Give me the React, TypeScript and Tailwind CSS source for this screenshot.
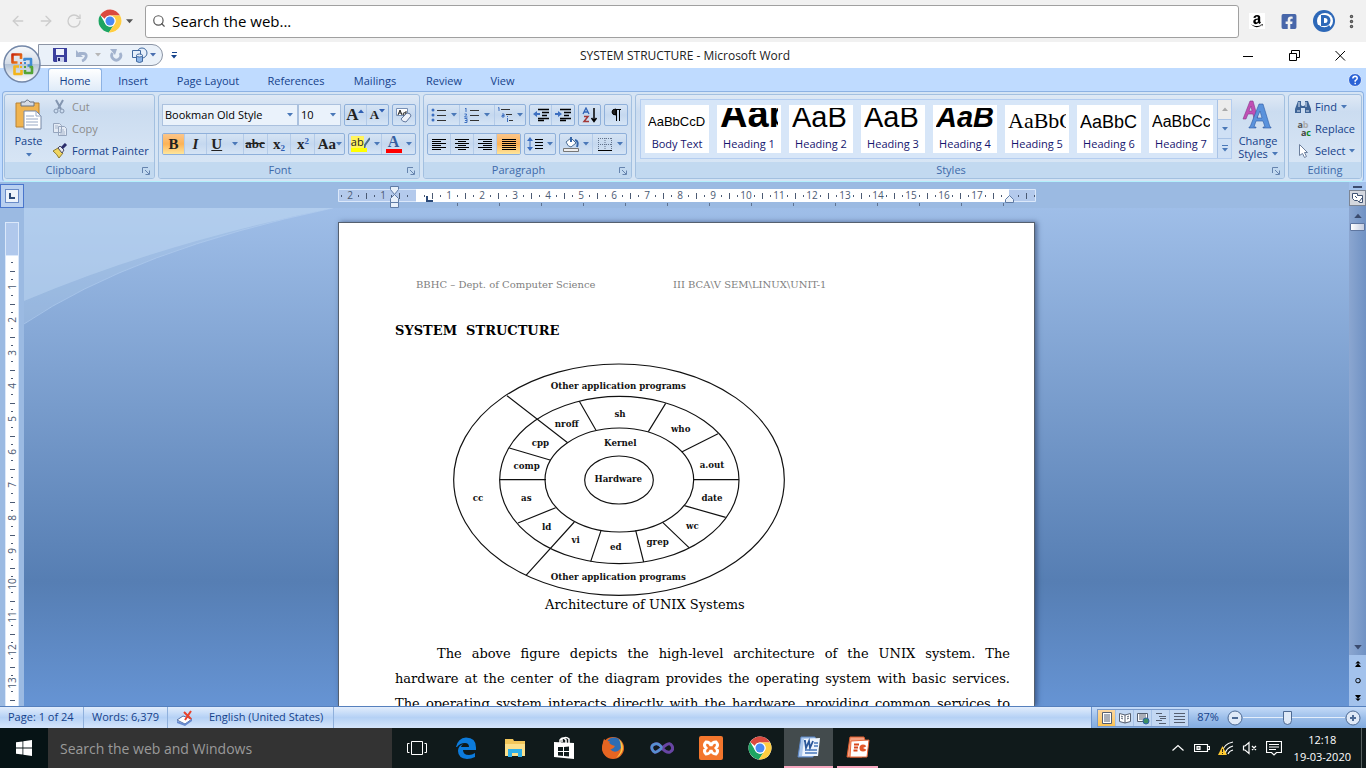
import type { ReactNode } from "react";
import clsx from "clsx";
import { ArrowLeft, ArrowRight, RotateCw, Search, EllipsisVertical } from "lucide-react";
import { FaAmazon, FaFacebookSquare } from "react-icons/fa";

function Caret({ className }: { className?: string }) {
  return (
    <svg viewBox="0 0 6 4" className={clsx("h-1 w-1.5 shrink-0", className)} fill="currentColor">
      <path d="M0 0h6L3 3.5z" />
    </svg>
  );
}

function ChromeLogo() {
  return (
    <svg viewBox="0 0 24 24" className="h-6 w-6">
      <circle cx="12" cy="12" r="11.5" fill="#fff" />
      <path d="M2.2 6A11.5 11.5 0 0 1 22.1 6.6H12a5.4 5.4 0 0 0-5 3.3z" fill="#db4a3f" />
      <path d="M2.2 6A11.5 11.5 0 0 0 10.9 23.4l4.6-6.9a5.4 5.4 0 0 1-8.3-2z" fill="#1da462" />
      <path d="M22.1 6.6A11.5 11.5 0 0 1 10.9 23.4l5.4-8.2a5.4 5.4 0 0 0 0-6.6L12 6.6z" fill="#ffcd41" />
      <circle cx="12" cy="12" r="5.6" fill="#fff" />
      <circle cx="12" cy="12" r="4.5" fill="#4a8af4" />
    </svg>
  );
}

function BrowserBar() {
  return (
    <header className="flex h-[42px] shrink-0 items-center bg-[#f1f1f1] pl-2.5">
      <nav className="flex items-center gap-3 text-[#ccc]">
        <button aria-label="Back"><ArrowLeft size={16} /></button>
        <button aria-label="Forward"><ArrowRight size={16} /></button>
        <button aria-label="Reload"><RotateCw size={16} /></button>
      </nav>
      <button aria-label="Browser" className="ml-4 flex items-center gap-1 text-[#555]">
        <ChromeLogo />
        <Caret className="h-[5px] w-[7px]" />
      </button>
      <label className="mr-2.5 ml-3 flex h-[33px] flex-1 items-center gap-1.5 rounded-[3px] border border-[#a0a0a0] bg-white pl-1.5">
        <Search size={14} className="text-[#555]" />
        <input
          aria-label="Search the web"
          placeholder="Search the web..."
          className="flex-1 text-[15px] text-black outline-none placeholder:text-black"
        />
      </label>
      <div className="flex items-center gap-4 pr-1.5">
        <button aria-label="Amazon" className="flex h-4 w-4 items-center justify-center bg-white"><FaAmazon size={14} /></button>
        <button aria-label="Facebook" className="flex h-4 w-4 items-center justify-center"><FaFacebookSquare size={17} color="#4867aa" /></button>
        <button aria-label="Disconnect">
          <svg viewBox="0 0 22 22" className="h-[22px] w-[22px]">
            <circle cx="11" cy="11" r="11" fill="#2d68b8" />
            <circle cx="12" cy="11" r="8" fill="#fff" />
            <path d="M3 15h3c3 3 8 3 10 0l2 3-6 3-6-1z" fill="#2d68b8" />
            <path d="M8 5h4a5.500 5.500 0 0 1 0 11H8zM11 8v5h1a2.500 2.500 0 0 0 0-5z" fill="#2d68b8" fillRule="evenodd" />
          </svg>
        </button>
        <button aria-label="Menu" className="-ml-2"><EllipsisVertical size={17} strokeWidth={3} color="#555" /></button>
      </div>
    </header>
  );
}

function OfficeButton() {
  return (
    <button aria-label="Office" className="absolute top-[3px] left-[3px] z-10 h-[38px] w-[38px]">
      <svg viewBox="0 0 38 38">
        <defs>
          <linearGradient id="orb" x1="0" y1="0" x2="0" y2="1">
            <stop offset="0" stopColor="#f8fafc" />
            <stop offset=".5" stopColor="#d3dbe6" />
            <stop offset=".51" stopColor="#b4c3d6" />
            <stop offset="1" stopColor="#fff" />
          </linearGradient>
          <linearGradient id="orbRed" x1="0" y1="0" x2="1" y2="1">
            <stop offset="0" stopColor="#c9280c" />
            <stop offset="1" stopColor="#f38b1c" />
          </linearGradient>
        </defs>
        <circle cx="19" cy="19" r="18" fill="url(#orb)" stroke="#7387a8" strokeWidth="1.500" />
        <g fill="none" strokeWidth="2.600" strokeLinejoin="round">
          <path d="M18 14V9.500H9.500v8h5" stroke="url(#orbRed)" />
          <path d="M21.500 16v-2H28v6.500h-3.500" stroke="#3f8bd3" />
          <path d="M16 21.500h-4.500V29h7v-4" stroke="#f3b51d" />
          <path d="M22 25v3h7v-6h-2.500" stroke="#53a435" />
        </g>
        <path d="M17 17h2v2h-2z" fill="#e8602c" />
        <path d="M21 17h2v2h-2z" fill="#3f8bd3" />
        <path d="M17 21h2v2h-2z" fill="#f3b51d" />
        <path d="M21 21h2v2h-2z" fill="#53a435" />
      </svg>
    </button>
  );
}

function TitleBar() {
  return (
    <div className="relative flex h-[26px] shrink-0 items-center bg-white">
      <OfficeButton />
      <div className="ml-[38px] flex h-[22px] w-[125px] items-center rounded-r-full border border-[#8c95a5] bg-[#eaf1f9] pl-3.5 text-[#4a6fb0]">
        <button aria-label="Save">
          <svg viewBox="0 0 14 14" className="h-3.5 w-3.5">
            <path d="M0 0h14v14H1l-1-1z" fill="#3b3f9d" />
            <path d="M3 1h8v6H3z" fill="#eef2fc" />
            <path d="M4 9h7v5H4z" fill="#c9d0ec" />
            <path d="M5 10h2v3H5z" fill="#23286e" />
          </svg>
        </button>
        <button aria-label="Undo" className="ml-2 flex items-center gap-1.5 text-[#b7b7b7]">
          <svg viewBox="0 0 14 14" className="h-3.5 w-3.5" fill="none" stroke="#a3b3ce" strokeWidth="2.800">
            <path d="M4 5.500h4q4 0 3 3.500-1 3-4 4" />
            <path d="M1 2v7h7z" fill="#a3b3ce" stroke="none" />
          </svg>
          <Caret />
        </button>
        <button aria-label="Repeat" className="ml-2">
          <svg viewBox="0 0 14 14" className="h-3.5 w-3.5" fill="none" stroke="#a3b3ce" strokeWidth="2.800">
            <path d="M3.500 5a4.500 4.500 0 1 0 7.500 0" />
            <path d="M1 1h7L6 7z" fill="#a3b3ce" stroke="none" />
          </svg>
        </button>
        <button aria-label="Shapes" className="ml-2 flex items-center gap-0.5">
          <svg viewBox="0 0 17 17" className="h-[17px] w-[17px]" fill="#e6effa" stroke="#41699f">
            <circle cx="11" cy="6" r="5" />
            <path d="M1.500 3.500h8v7h-8z" />
            <path d="M5.500 8.500v6q3 2 6 0v-6z" fill="#8fb6e8" />
            <ellipse cx="8.500" cy="8.500" rx="3" ry="1.500" />
          </svg>
          <Caret />
        </button>
      </div>
      <button aria-label="Customize Quick Access Toolbar" className="ml-2 flex flex-col items-center gap-0.5 text-[#15428b]">
        <span className="h-px w-[5px] bg-[#15428b]" />
        <Caret />
      </button>
      <h1 className="pointer-events-none absolute inset-x-0 pt-0.5 pl-1 text-center text-[12px] text-[#222]">SYSTEM STRUCTURE - Microsoft Word</h1>
      <div className="ml-auto flex gap-[35px] pr-5">
        {[
          { name: "Minimize", d: "M0 6.500h10" },
          { name: "Restore", d: "M.5 3.500h7v7h-7zM2.500 3V.5h8v7H8" },
          { name: "Close", d: "M.5 1l9.500 9.500M10 1L.5 10.500" },
        ].map((item) => (
          <button key={item.name} aria-label={item.name}>
            <svg viewBox="0 0 11 11" className="h-[11px] w-[11px]" fill="none" stroke="#000"><path d={item.d} /></svg>
          </button>
        ))}
      </div>
    </div>
  );
}

const tabs = [
  { label: "Insert", width: "w-[54px]" },
  { label: "Page Layout", width: "w-[96px]" },
  { label: "References", width: "w-[80px]" },
  { label: "Mailings", width: "w-[78px]" },
  { label: "Review", width: "w-[60px]" },
  { label: "View", width: "w-[57px]" },
];

function TabRow() {
  return (
    <nav className="flex h-[23px] shrink-0 items-center bg-[#bfdbff] pl-12 text-[#15428b]">
      <button className="h-full w-[54px] rounded-t-[3px] border border-b-0 border-[#8db2e3] bg-gradient-to-b from-white to-[#dfebf8] pt-0.5">Home</button>
      <div className="flex pt-[3px] pl-1">
        {tabs.map((tab) => (
          <button key={tab.label} className={tab.width}>{tab.label}</button>
        ))}
      </div>
      <button aria-label="Help" className="mr-1 ml-auto">
        <svg viewBox="0 0 14 14" className="h-3.5 w-3.5">
          <circle cx="7" cy="7" r="6.500" fill="#2a62d6" stroke="#dbe8fa" />
          <path d="M4.800 5.500Q5 3.300 7.200 3.300 9.300 3.500 9.200 5.300 9 6.500 7.200 7.600V8.800M7.200 9.800v1.400" fill="none" stroke="#fff" strokeWidth="1.500" />
        </svg>
      </button>
    </nav>
  );
}

interface GroupProps {
  title: string;
  launcher?: boolean;
  className?: string;
  children: ReactNode;
}

function RibbonGroup({ title, launcher = true, className, children }: GroupProps) {
  return (
    <section className={clsx("flex flex-col overflow-hidden rounded-[3px] border border-[#a3c0e0] bg-gradient-to-b from-[#dfe9f5] via-[#cbdcf0] via-20% to-[#dbe8f6]", className)}>
      <div className="flex-1">{children}</div>
      <footer className={clsx("relative flex h-4 items-center justify-center bg-[#c2d9f0] pt-px text-[#3e6aaa]", launcher && "pr-[18px]")}>
        {title}
        {launcher && (
          <button aria-label={`${title} options`} className="absolute right-1">
            <svg viewBox="0 0 8 8" className="h-2 w-2" fill="none" stroke="#6684ae"><path d="M.5 6V.5H6M3 3l4 4M7.500 3.500v4h-4" /></svg>
          </button>
        )}
      </footer>
    </section>
  );
}

function ButtonSet({ children }: { children: ReactNode }) {
  return (
    <div className="flex h-[22px] divide-x divide-[#b4cbe8] overflow-hidden rounded-[2px] border border-[#8fb0da] bg-gradient-to-b from-[#d6e4f4] via-[#c5d8ef] to-[#d5e4f5]">
      {children}
    </div>
  );
}

interface ToolProps {
  label: string;
  width?: string;
  caret?: boolean;
  active?: boolean;
  children: ReactNode;
}

function Tool({ label, width = "w-[22px]", caret, active, children }: ToolProps) {
  return (
    <button
      aria-label={label}
      className={clsx("flex items-center justify-center gap-1 text-[#222]", width, active && "bg-gradient-to-b from-[#fbc589] via-[#fcb356] to-[#fee69b]")}
    >
      {children}
      {caret && <Caret className="text-[#4a78b8]" />}
    </button>
  );
}

function Icon({ children, width = "w-4", box = "0 0 16 16" }: { children: ReactNode; width?: string; box?: string }) {
  return <svg viewBox={box} className={clsx("h-4 shrink-0", width)} fill="none" stroke="#000">{children}</svg>;
}

function ClipboardGroup() {
  return (
    <RibbonGroup title="Clipboard" className="w-[151px]">
      <div className="flex pt-px">
        <button className="flex w-[47px] flex-col items-center pt-[3px] text-[#15428b]">
          <svg viewBox="0 0 28 32" className="h-8 w-7">
            <path d="M1 4h23v24H1z" fill="#f0b450" stroke="#b88132" />
            <path d="M6 7V3h4q2-4 5 0h4v4z" fill="#d6dbe4" stroke="#69717f" />
            <path d="M9 12h12l5 5v13H9z" fill="#fff" stroke="#7688a6" />
            <path d="M21 12v5h5M11 17h8M11 20h12M11 23h12M11 26h12" fill="none" stroke="#97a8c4" />
          </svg>
          <span className="leading-5">Paste</span>
          <Caret className="mt-0.5 text-[#4a78b8]" />
        </button>
        <div className="flex flex-col text-[#8d8d8d]">
          <button className="flex h-[22px] items-center gap-1">
            <Icon>
              <path d="M4 1l5 9M11 1L6 10" stroke="#8496b0" strokeWidth="2" />
              <circle cx="4" cy="12" r="2" stroke="#8496b0" /><circle cx="10" cy="12" r="2" stroke="#8496b0" />
            </Icon>
            Cut
          </button>
          <button className="flex h-[22px] items-center gap-1">
            <Icon>
              <path d="M1.500 2.500h6l2 2v7h-8zM6.500 5.500h6l2 2v7h-8z" fill="#e4ebf5" stroke="#96a5bd" />
              <path d="M3 5h3M3 7h3M8 9h4M8 11h5M8 13h5" stroke="#a9b7cc" />
            </Icon>
            Copy
          </button>
          <button className="flex h-[22px] items-center gap-1 text-[#15428b]">
            <Icon>
              <path d="M1 8l5-3 5 5-4 5q-2-4-6-7z" fill="#efd45f" stroke="#8c7a30" />
              <path d="M6 5l2-2 4 4-2 3z" fill="#e5e8f0" stroke="#4c4c68" />
              <path d="M10 5l4-4" stroke="#2b2d6b" strokeWidth="3" />
            </Icon>
            Format Painter
          </button>
        </div>
      </div>
    </RibbonGroup>
  );
}

function ComboBox({ label, value, width }: { label: string; value: string; width: string }) {
  return (
    <label className={clsx("relative flex h-[22px] items-center border border-[#abc1de] bg-[#eaf2fb]", width)}>
      <select aria-label={label} className="h-full w-full appearance-none pl-0.5 text-black outline-none">
        <option>{value}</option>
      </select>
      <Caret className="pointer-events-none absolute right-1 text-[#4a78b8]" />
    </label>
  );
}

function FontGroup() {
  return (
    <RibbonGroup title="Font" className="w-[262px]">
      <div className="flex flex-col gap-[7px] px-[3px] pt-[9px]">
        <div className="flex gap-[3px]">
          <div className="flex">
            <ComboBox label="Font" value="Bookman Old Style" width="w-[136px]" />
            <ComboBox label="Font size" value="10" width="w-[43px]" />
          </div>
          <ButtonSet>
            <Tool label="Grow Font">
              <span className="font-['Liberation_Serif'] text-[17px] font-bold">A</span>
              <Caret className="-ml-1 mb-2 rotate-180 text-[#2f5fb3]" />
            </Tool>
            <Tool label="Shrink Font">
              <span className="font-['Liberation_Serif'] text-[13px] font-bold">A</span>
              <Caret className="-ml-1 mb-2 text-[#2f5fb3]" />
            </Tool>
          </ButtonSet>
          <ButtonSet>
            <Tool label="Clear Formatting">
              <Icon>
                <path d="M.5 1.500h11v7H.5z" fill="#fff" stroke="#7890b5" />
                <path d="M2 8l2-5 2 5M3 6h2M10 4v4q-3 1-3-1t3-1" stroke="#222" />
                <path d="M5 12l6-6q4 0 4 3l-5 6q-4 0-5-3z" fill="#eef2fa" stroke="#63799f" />
              </Icon>
            </Tool>
          </ButtonSet>
        </div>
        <div className="flex gap-[3px] font-['Liberation_Serif'] text-[15px]">
          <ButtonSet>
            <Tool label="Bold" active><b>B</b></Tool>
            <Tool label="Italic"><i className="font-bold">I</i></Tool>
            <Tool label="Underline" width="w-[37px]" caret><u className="mr-1.5 font-bold">U</u></Tool>
            <Tool label="Strikethrough" width="w-6"><s className="text-[13px] font-bold">abc</s></Tool>
            <Tool label="Subscript" width="w-6"><span className="font-bold">x<sub className="text-[9px] text-[#2f5fb3]">2</sub></span></Tool>
            <Tool label="Superscript" width="w-6"><span className="font-bold">x<sup className="text-[9px] text-[#2f5fb3]">2</sup></span></Tool>
            <Tool label="Change Case" width="w-[29px]" caret><b className="-mr-1">Aa</b></Tool>
          </ButtonSet>
          <ButtonSet>
            <Tool label="Highlight" width="w-[33px]" caret>
              <span className="flex flex-col items-start font-['Open_Sans'] text-[11px] leading-3">
                <span className="flex h-3"><span className="bg-[#fff35c]">ab</span><Icon width="w-1.5" box="0 0 6 16"><path d="M6 2L1 9l-1 4" stroke="#4c6f8d" strokeWidth="2" /></Icon></span>
                <span className="h-1 w-4 bg-[#ff0]" />
              </span>
            </Tool>
            <Tool label="Font Color" width="w-[33px]" caret>
              <span className="flex flex-col items-center text-[16px] leading-[14px] font-bold text-[#365f9f]">A<span className="h-1 w-4 bg-[#f00]" /></span>
            </Tool>
          </ButtonSet>
        </div>
      </div>
    </RibbonGroup>
  );
}

const aligns = [
  { name: "Align Left", d: "M1 3.500h14M1 5.500h9M1 7.500h14M1 9.500h9M1 11.500h14M1 13.500h9" },
  { name: "Center", d: "M1 3.500h14M4 5.500h8M1 7.500h14M4 9.500h8M1 11.500h14M4 13.500h8" },
  { name: "Align Right", d: "M1 3.500h14M6 5.500h9M1 7.500h14M6 9.500h9M1 11.500h14M6 13.500h9" },
  { name: "Justify", d: "M1 3.500h14M1 5.500h14M1 7.500h14M1 9.500h14M1 11.500h14M1 13.500h14" },
];

function ParagraphGroup() {
  return (
    <RibbonGroup title="Paragraph" className="w-[209px]">
      <div className="flex flex-col gap-[7px] px-[3px] pt-[9px]">
        <div className="flex gap-[3px]">
          <ButtonSet>
            <Tool label="Bullets" width="w-[33px]" caret>
              <Icon>
                <g fill="#3d6fc0" stroke="none"><circle cx="2" cy="3" r="1.500" /><circle cx="2" cy="8" r="1.500" /><circle cx="2" cy="13" r="1.500" /></g>
                <path d="M6 3.500h9M6 8.500h9M6 13.500h9" stroke="#333" />
              </Icon>
            </Tool>
            <Tool label="Numbering" width="w-[35px]" caret>
              <Icon>
                <path d="M1 2l1-1v4M.5 7h2v1l-2 2h3M.5 11.500h2.500v4H.5M1 13.500h2" stroke="#3d6fc0" />
                <path d="M6 3.500h9M6 8.500h9M6 13.500h9" stroke="#333" />
              </Icon>
            </Tool>
            <Tool label="Multilevel List" width="w-[31px]" caret>
              <Icon>
                <path d="M1 1l1-.5V4M5 7h2v3H5V8.500h2M10.500 11v4M10.500 9v1" stroke="#3d6fc0" />
                <path d="M4 2.500h9M9 7.500h6M12 13.500h4" stroke="#333" />
              </Icon>
            </Tool>
          </ButtonSet>
          <ButtonSet>
            <Tool label="Decrease Indent">
              <Icon>
                <path d="M5 2.500h11M9 5.500h7M9 8.500h5M5 11.500h11M5 13.500h6" strokeWidth="1.500" />
                <path d="M0 7l4-3v2h3v2H4v2z" fill="#3d6fc0" stroke="none" />
              </Icon>
            </Tool>
            <Tool label="Increase Indent">
              <Icon>
                <path d="M5 2.500h11M9 5.500h7M9 8.500h5M5 11.500h11M5 13.500h6" strokeWidth="1.500" />
                <path d="M7 7L3 4v2H0v2h3v2z" fill="#3d6fc0" stroke="none" />
              </Icon>
            </Tool>
          </ButtonSet>
          <ButtonSet>
            <Tool label="Sort">
              <Icon>
                <path d="M1 7l3-6 3 6M2 5h4" stroke="#2f62b5" strokeWidth="1.300" />
                <path d="M2 9.500h4l-4 5h5" stroke="#a33838" strokeWidth="1.500" />
                <path d="M12 1v13M9.500 11l2.500 3.500 2.500-3.500" strokeWidth="1.500" />
              </Icon>
            </Tool>
          </ButtonSet>
          <ButtonSet>
            <Tool label="Show formatting marks">
              <Icon><path d="M13 2.500H7M8.500 2v12M11.500 2v12" /><path d="M8 2v6q-4 0-4-3t4-3z" fill="#222" /></Icon>
            </Tool>
          </ButtonSet>
        </div>
        <div className="flex gap-[3px]">
          <ButtonSet>
            {aligns.map((item) => (
              <Tool key={item.name} label={item.name} width="w-[23px]" active={item.name === "Justify"}>
                <Icon><path d={item.d} /></Icon>
              </Tool>
            ))}
          </ButtonSet>
          <ButtonSet>
            <Tool label="Line spacing" width="w-[30px]" caret>
              <Icon>
                <path d="M3 3v10" stroke="#3d6fc0" />
                <path d="M0 5l3-4 3 4zM0 11l3 4 3-4z" fill="#3d6fc0" stroke="none" />
                <path d="M8 3.500h8M8 6.500h8M8 9.500h8M8 12.500h8" />
              </Icon>
            </Tool>
          </ButtonSet>
          <ButtonSet>
            <Tool label="Shading" width="w-[33px]" caret>
              <Icon>
                <path d="M3 6l5-4 5 5-5 4q-3 0-5-5z" fill="#fff" stroke="#4b6e96" />
                <path d="M8 1v5M12 4q4 1 2 7" stroke="#3666a8" strokeWidth="2" />
                <path d="M.5 12.500h15v3H.5z" fill="#eee" stroke="#777" />
              </Icon>
            </Tool>
            <Tool label="Borders" width="w-[33px]" caret>
              <Icon>
                <path d="M1.500 2v12M8 2v12M14.500 2v12M1 2.500h14M1 8.500h14" stroke="#62738c" strokeDasharray="1 1" />
                <path d="M1 14.500h14" />
              </Icon>
            </Tool>
          </ButtonSet>
        </div>
      </div>
    </RibbonGroup>
  );
}

const styles = [
  { name: "Body Text", sample: "AaBbCcD", look: "text-[13px] leading-[26px]" },
  { name: "Heading 1", sample: "Aab", look: "text-[38px] leading-[42px] font-bold" },
  { name: "Heading 2", sample: "AaB", look: "text-[29px] leading-[35px]" },
  { name: "Heading 3", sample: "AaB", look: "text-[29px] leading-[35px]" },
  { name: "Heading 4", sample: "AaB", look: "text-[29px] leading-[35px] font-bold italic" },
  { name: "Heading 5", sample: "AaBbC", look: "font-['Liberation_Serif'] text-[22px] leading-7" },
  { name: "Heading 6", sample: "AaBbC", look: "text-[18px] leading-[26px]" },
  { name: "Heading 7", sample: "AaBbCc", look: "text-[16px] leading-[26px]" },
];

function StylesGroup() {
  return (
    <RibbonGroup title="Styles" className="min-w-0 flex-1">
      <div className="flex gap-[3px] pt-1 pr-[3px] pl-1">
        <div className="flex h-[60px] flex-1 border border-[#b4cdf0] bg-[#d7e6f8]">
          <div className="flex flex-1 items-center gap-2 overflow-hidden pl-1 font-['Liberation_Sans']">
            {styles.map((item) => (
              <button key={item.name} className="flex h-12 w-16 shrink-0 flex-col justify-end bg-white text-[#15156e]">
                <span className="mx-[3px] flex h-[27px] items-end overflow-hidden text-black">
                  <span className={item.look}>{item.sample}</span>
                </span>
                <span className="h-[18px] w-full text-center font-['Open_Sans'] leading-[18px]">{item.name}</span>
              </button>
            ))}
          </div>
          <div className="flex w-[14px] flex-col divide-y divide-[#a9c3e6] border-l border-[#a9c3e6] bg-[#cfe0f5] text-[#4a78b8]">
            <button aria-label="Previous styles" className="flex flex-1 items-center justify-center bg-[#ececec] text-[#aaa]"><Caret className="rotate-180" /></button>
            <button aria-label="Next styles" className="flex flex-1 items-center justify-center"><Caret /></button>
            <button aria-label="More styles" className="flex flex-1 flex-col items-center justify-center gap-0.5"><span className="h-px w-1.5 bg-[#4a78b8]" /><Caret /></button>
          </div>
        </div>
        <button className="flex w-[46px] flex-col items-center text-[#15428b]">
          <svg viewBox="0 0 32 30" className="h-[30px] w-8">
            <path d="M1 20L8 2h3l5 18h-4l-1-5H6l-2 5zM7 12h3L9 7z" fill="#c04fb5" stroke="#86378a" strokeWidth=".6" fillRule="evenodd" />
            <path d="M8 28l9-23h4l7 23h1v1h-8v-1h2l-2-6h-7l-2 6h2v1H7v-1zM15 19h5l-2-7z" fill="#5a92dc" stroke="#2f5ca5" strokeWidth=".6" fillRule="evenodd" />
          </svg>
          <span className="mt-[5px] leading-[13px]">Change</span>
          <span className="flex items-center gap-1 leading-[13px]">Styles <Caret className="text-[#4a78b8]" /></span>
        </button>
      </div>
    </RibbonGroup>
  );
}

function EditingGroup() {
  return (
    <RibbonGroup title="Editing" launcher={false} className="w-[74px]">
      <div className="flex flex-col pt-px pl-1.5 text-[#15428b]">
        <button className="flex h-[22px] items-center gap-1">
          <Icon>
            <path d="M3 2h3v4l1 1h2l1-1V2h3l3 8v4h-6V9H6v5H0v-4z" fill="#3e6496" stroke="none" />
            <path d="M2 12h3M11 12h3M4 3v5M11 3v5" stroke="#dbe6f5" />
          </Icon>
          Find <Caret className="text-[#4a78b8]" />
        </button>
        <button className="flex h-[22px] items-center gap-1">
          <span className="flex w-4 shrink-0 flex-col text-[9px] leading-2 font-bold">
            <span className="text-[#555]">a<span className="text-[#aaa]">b</span></span>
            <span className="text-right text-[#444]">a<span className="text-[#0a8a25]">c</span></span>
          </span>
          Replace
        </button>
        <button className="flex h-[22px] items-center gap-1">
          <Icon><path d="M4.500 1.500v11l3-2 2 4 2-1-2-4h3z" fill="#fff" stroke="#6c7f9c" /></Icon>
          Select <Caret className="text-[#4a78b8]" />
        </button>
      </div>
    </RibbonGroup>
  );
}

function Ribbon() {
  return (
    <div className="shrink-0 bg-[#bfdbff] px-0.5">
      <div className="flex h-[91px] gap-[3px] rounded-[4px] border border-[#8db2e3] border-b-[#b3f0fb] bg-[#d5e4f4] px-px py-0.5">
        <ClipboardGroup />
        <FontGroup />
        <ParagraphGroup />
        <StylesGroup />
        <EditingGroup />
      </div>
    </div>
  );
}

// one centimetre on either ruler is 33 pixels
const CM = 33;

function HorizontalRuler() {
  const zero = 78;
  const marks = Array.from({ length: 22 }, (_, i) => i - 3);
  return (
    <svg viewBox="0 0 698 26" className="h-[26px] w-[698px]" fontFamily="Open Sans" fontSize="10" fill="#4b5a73">
      <path d="M.5 7.500h697v12H.5z" fill="#b4caec" stroke="#dbe8fa" />
      <path d="M78 7h593v13H78z" fill="#fff" />
      {marks.map((n) => {
        const x = zero + n * CM;
        return (
          <g key={n}>
            {n !== 0 && n > -3 && n < 18 && <text x={x} y="17" textAnchor="middle">{Math.abs(n)}</text>}
            <path d={`M${x + 8} 13h1v2h-1zM${x + 16} 11h1v6h-1zM${x + 24} 13h1v2h-1z`} />
          </g>
        );
      })}
      {Array.from({ length: 14 }, (_, i) => (
        <path key={i} d={`M${119 + i * 42} 21h1v3h-1z`} fill="#5f7391" />
      ))}
      <path d="M88 14h2v4h5v2h-7z" fill="#2c4a78" />
      <g fill="#e8f0fa" stroke="#5f7ba5">
        <path d="M52.500 4.500h8v3l-4 5-4-5z" />
        <path d="M52.500 20.500v-4l4-4 4 4v4z" />
        <path d="M52.500 20.500h8v5h-8z" />
        <path d="M667.500 20.500v-3l4-4 4 4v3z" />
      </g>
    </svg>
  );
}

function VerticalRuler() {
  return (
    <svg viewBox="0 0 24 498" className="h-[498px] w-6 shrink-0" fontFamily="Open Sans" fontSize="10" fill="#4b5a73">
      <path d="M5 14h14v484H5z" fill="#dbe8fa" />
      <path d="M6 15h12v32H6z" fill="#b0c8ec" />
      <path d="M6 48h12v450H6z" fill="#fff" />
      {Array.from({ length: 14 }, (_, n) => {
        const y = 46 + n * CM;
        return (
          <g key={n}>
            {n > 0 && <text transform={`translate(16 ${y}) rotate(-90)`} textAnchor="middle">{n}</text>}
            <path d={`M11 ${y + 8}h2v1h-2zM10 ${y + 17}h5v1h-5zM11 ${y + 25}h2v1h-2z`} />
          </g>
        );
      })}
    </svg>
  );
}

const spokes = "M201 122L383 263M418 139L468 226M677 145L625 230M834 236L725 291M208 279L330 315M179 374H318M761 374H897M234 504L347 458M403 501L258 661M483 527L452 620M587 526L611 621M668 502L747 578M733 452L857 487";

const labels: [number, number, string][] = [
  [535, 102, "Other application programs"],
  [535, 675, "Other application programs"],
  [540, 186, "sh"],
  [380, 217, "nroff"],
  [722, 231, "who"],
  [301, 273, "cpp"],
  [541, 273, "Kernel"],
  [260, 343, "comp"],
  [816, 340, "a.out"],
  [535, 381, "Hardware"],
  [114, 439, "cc"],
  [259, 439, "as"],
  [816, 438, "date"],
  [320, 524, "ld"],
  [757, 521, "wc"],
  [407, 564, "vi"],
  [527, 585, "ed"],
  [653, 571, "grep"],
];

function UnixDiagram() {
  return (
    <svg viewBox="0 0 1080 726" className="ml-[45px] h-[242px] w-[360px]" role="img" aria-label="Architecture of UNIX Systems">
      <g fill="none" stroke="#111" strokeWidth="3.500">
        <ellipse cx="537" cy="374" rx="496" ry="347" />
        <ellipse cx="538" cy="375" rx="359" ry="251" />
        <ellipse cx="538" cy="375" rx="223" ry="156" />
        <ellipse cx="537" cy="375" rx="103" ry="72" />
        <path d={spokes} />
      </g>
      <g fontFamily="DejaVu Serif" fontWeight="700" fontSize="26" textAnchor="middle" fill="#111">
        {labels.map(([x, y, text]) => (
          <text key={`${text}${y}`} x={x} y={y}>{text}</text>
        ))}
      </g>
    </svg>
  );
}

function DocumentPage() {
  return (
    <article className="min-h-full w-[697px] shrink-0 border border-b-0 border-[#55606f] bg-white pt-[54px] pr-6 pl-14 font-['DejaVu_Serif'] text-[13px] text-black shadow-[2px_0_5px_rgba(30,50,90,0.6)]">
      <p className="flex pl-[21px] text-[10px] leading-4 text-[#808080]">
        <span className="w-[257px] whitespace-nowrap">BBHC – Dept. of Computer Science</span>
        <span>III BCA\V SEM\LINUX\UNIT-1</span>
      </p>
      <h2 className="mt-[30px] mb-4 leading-4 font-bold">SYSTEM&nbsp; STRUCTURE</h2>
      <UnixDiagram />
      <p className="ml-[150px] leading-4">Architecture of UNIX Systems</p>
      <p className="mt-7 text-justify indent-[42px] leading-[25px] [text-align-last:justify]">
        The above figure depicts the high-level architecture of the UNIX system. The hardware at the center of the diagram
        provides the operating system with basic services. The operating system interacts directly with the hardware,
        providing common services to
      </p>
    </article>
  );
}

function ScrollColumn() {
  return (
    <div className="flex w-[17px] shrink-0 flex-col items-stretch bg-[#a3c2ec]">
      <span className="mx-1 mt-1 h-0.5 bg-[#3b4b6e]" />
      <button aria-label="View Ruler" className="mt-0.5 flex h-4 items-center justify-center border border-[#7c8594] bg-[#d4d7de]">
        <svg viewBox="0 0 12 12" className="h-3 w-3" fill="#fff" stroke="#3f5273"><path d="M.5 1.500h5v2h5v7h-3l-2-2h-3l-2-2z" /><path d="M3 4l2 2M7 10l3-4" /></svg>
      </button>
      <div className="flex flex-1 flex-col bg-gradient-to-r from-[#8ba6d0] to-[#7092c4] pt-px text-[#3b4b6e]">
        <button aria-label="Scroll up" className="flex h-4 items-center justify-center"><Caret className="h-[5px] w-2 rotate-180" /></button>
        <button aria-label="Scroll thumb" className="mx-px h-2 rounded-[1px] border border-[#5e76a0] bg-gradient-to-r from-white to-[#c3cce0]" />
        <button aria-label="Scroll down" className="mt-auto flex h-4 items-center justify-center"><Caret className="h-[5px] w-2" /></button>
      </div>
      {[
        { name: "Previous Page", d: "M1 4l3-3 3 3zM1 7l3-3 3 3zM1 7h6v1H1z" },
        { name: "Select Browse Object", d: "M4 1a3 3 0 1 0 .1 0zM4 2a2 2 0 1 1-.1 0z" },
        { name: "Next Page", d: "M1 1h6v1H1zM1 2l3 3 3-3zM1 5l3 3 3-3z" },
      ].map((item) => (
        <button key={item.name} aria-label={item.name} className="flex h-[17px] items-center justify-center">
          <svg viewBox="0 0 8 9" className="h-2 w-2"><path d={item.d} /></svg>
        </button>
      ))}
    </div>
  );
}

function Workspace() {
  return (
    <main className="flex min-h-0 flex-1">
      <div className="flex min-w-0 flex-1 flex-col bg-[#9bbae2]">
        <div className="flex h-[26px] shrink-0">
          <div className="flex w-6 shrink-0 items-end">
            <button aria-label="Tab selector" className="flex h-6 w-6 shrink-0 items-center justify-center border border-[#4a76cc] bg-[#b9d0f0]">
              <span className="flex h-3.5 w-3.5 items-center justify-center border border-[#6a8cc8] bg-[#eef4fc]">
                <span className="h-1.5 w-1.5 border-b-2 border-l-2 border-[#2c4a78]" />
              </span>
            </button>
          </div>
          <div className="flex flex-1 justify-center"><HorizontalRuler /></div>
        </div>
        <div className="flex min-h-0 flex-1 overflow-hidden">
          <VerticalRuler />
          <div className="relative flex flex-1 justify-center overflow-hidden bg-gradient-to-b from-[#9fbee8] via-[#567eb3] via-75% to-[#6694d4] pt-3.5">
            <svg viewBox="0 0 312 118" className="absolute top-0 left-0 h-[118px] w-[312px]">
              <path d="M0 0H309Q110 42 0 116z" fill="#b5d0ec" fillOpacity=".3" />
              <path d="M0 0H309Q140 34 0 93z" fill="#c2d9f5" fillOpacity=".45" />
              <path d="M309 0Q110 42 0 116" fill="none" stroke="#b4cff0" strokeOpacity=".6" />
            </svg>
            <DocumentPage />
          </div>
        </div>
      </div>
      <ScrollColumn />
    </main>
  );
}

const views = [
  { name: "Print Layout", d: "M2.500 1.500h9v11h-9zM4 4h6M4 6h6M4 8h6M4 10h6" },
  { name: "Full Screen Reading", d: "M1.500 2.500L7 4l5.500-1.500v8L7 12l-5.500-1.500zM7 4v8M3 5l2 1M3 7l2 1M11 5L9 6M11 7L9 8" },
  { name: "Web Layout", d: "M1.500 2.500h10v8h-10zM3 4h7M3 6h7M3 8h5" },
  { name: "Outline", d: "M2 2.500h6M5 5.500h7M6 7.500h6M2 9.500h6M5 12.500h7" },
  { name: "Draft", d: "M2 2.500h11M2 5.500h11M2 8.500h11M2 11.500h11" },
];

function ZoomButton({ label, d }: { label: string; d: string }) {
  return (
    <button aria-label={label}>
      <svg viewBox="0 0 16 16" className="h-4 w-4" fill="#dfe9f7" stroke="#4d6a94">
        <circle cx="8" cy="8" r="7" />
        <path d={d} strokeWidth="2" />
      </svg>
    </button>
  );
}

function StatusBar() {
  return (
    <div className="flex h-[22px] shrink-0 items-center border-t border-[#5680bd] bg-gradient-to-b from-[#e2edfc] via-[#b5d1f5] to-[#d5e5fb] text-[#15428b]">
      <span className="flex h-full w-[84px] items-center border-r border-[#8fb0dc] pl-2">Page: 1 of 24</span>
      <span className="flex h-full w-[84px] items-center border-r border-[#8fb0dc] pl-2">Words: 6,379</span>
      <span className="flex h-full w-[166px] items-center gap-4 border-r border-[#8fb0dc] pl-2">
        <svg viewBox="0 0 17 16" className="h-4 w-[17px]">
          <path d="M1 10l6-4 9 3-7 5z" fill="#fff" stroke="#5672a8" />
          <path d="M1 11v2l8 3 7-5v-2l-7 5z" fill="#6689cf" />
          <path d="M8 2l7 7M15 1L9 10" stroke="#e8412a" strokeWidth="2" />
        </svg>
        English (United States)
      </span>
      <div className="ml-auto flex h-full items-center border-l border-[#6c93cc] bg-gradient-to-b from-[#c5dbf8] via-[#9dbfea] to-[#82abdf] pl-[5px]">
        <div className="flex h-[18px] divide-x divide-[#a5c1e6] border border-[#7798c9] bg-[#c3d8f3]">
          {views.map((item, i) => (
            <button key={item.name} aria-label={item.name} className={clsx("flex w-[18px] items-center justify-center", i === 0 && "bg-gradient-to-b from-[#fbd7a0] to-[#fdc552]")}>
              <svg viewBox="0 0 14 14" className="h-3.5 w-3.5" fill={i < 3 ? "#fff" : "none"} stroke="#555f70">
                <path d={item.d} />
                {i === 2 && <circle cx="10" cy="10" r="3" fill="#3d8f62" stroke="#2d64a8" />}
              </svg>
            </button>
          ))}
        </div>
        <button className="w-[38px]">87%</button>
        <ZoomButton label="Zoom Out" d="M5 8h6" />
        <input
          type="range"
          aria-label="Zoom"
          min={0}
          max={100}
          defaultValue={43}
          className="h-4 w-[102px] appearance-none bg-[linear-gradient(#e4eefb,#e4eefb)] bg-[length:100%_1px] bg-center bg-no-repeat [&::-webkit-slider-thumb]:h-3.5 [&::-webkit-slider-thumb]:w-[9px] [&::-webkit-slider-thumb]:appearance-none [&::-webkit-slider-thumb]:rounded-b-full [&::-webkit-slider-thumb]:border [&::-webkit-slider-thumb]:border-[#4d6a94] [&::-webkit-slider-thumb]:bg-[#dfe9f7]"
        />
        <ZoomButton label="Zoom In" d="M5 8h6M8 5v6" />
        <span className="w-[5px]" />
      </div>
    </div>
  );
}

function TaskIcon({ children }: { children: ReactNode }) {
  return <svg viewBox="0 0 24 24" className="h-6 w-6">{children}</svg>;
}

const apps: { name: string; icon: ReactNode }[] = [
  { name: "Task View", icon: <TaskIcon><path d="M6.500 5.500h11v13h-11zM4.500 7.500h-2v9h2M19.500 7.500h2v9h-2" fill="none" stroke="#fff" /></TaskIcon> },
  { name: "Edge", icon: <TaskIcon><path d="M2 11Q4 2 12 1.500q10 0 10 10V14H9q0 5 6 5 3 0 6-2v4q-4 2-8 2-9-1-9-8 0-5 5-7-2 2-2 3h8q0-4-4-4-5 0-8 4z" fill="#0c7bdc" /></TaskIcon> },
  {
    name: "File Explorer",
    icon: <TaskIcon><path d="M2 3h8l1 2h11v15H2z" fill="#f2c65a" /><path d="M2 8h20v12H2z" fill="#fce08b" /><path d="M5 13h14v8h-4v-4H9v4H5z" fill="#2fb0e8" /></TaskIcon>,
  },
  {
    name: "Store",
    icon: <TaskIcon><path d="M2 6l20 1v16L2 21z" fill="#fff" /><path d="M8 7V4q3-4 6 0v3M10 6V3q4-3 7 0v4" fill="none" stroke="#fff" strokeWidth="1.500" /><path d="M6 11h5v4H6zM12 11l5-.5V15h-5zM6 16h5v4l-5-.5zM12 16h5v4.500l-5-.5z" fill="#101c1d" /></TaskIcon>,
  },
  {
    name: "Firefox",
    icon: <TaskIcon><circle cx="12" cy="12" r="11" fill="#e66522" /><circle cx="13" cy="9.500" r="8" fill="#2c6db4" /><path d="M2 6l1-3q3 3 6 2-2 2 2 4l3 1q-2 4-5 3 3 4 8 2 5-3 3-9 4 4 2 9-3 7-10 7-9 0-11-9z" fill="#e66522" /><path d="M18 3q6 6 3 13-2 4-6 6 5-5 5-10 0-5-2-9z" fill="#fcc544" /></TaskIcon>,
  },
  {
    name: "Visual Studio",
    icon: <TaskIcon><path d="M12 12q-3-5-7-4-4 1-3 5 2 5 6 2l8-6q4-3 6 1 2 4-2 6-4 1-8-4z" fill="none" stroke="#6845a4" strokeWidth="3" /><path d="M12 12q-3-5-7-4-4 1-3 5 2 5 6 2l4-3" fill="none" stroke="#5590d0" strokeWidth="2.500" /></TaskIcon>,
  },
  {
    name: "XAMPP",
    icon: <TaskIcon><rect width="24" height="24" rx="2" fill="#f3762d" /><path d="M7 6q4 0 5 4 1-4 5-4 3 3 0 6 3 3 0 6-4 0-5-4-1 4-5 4-3-3 0-6-3-3 0-6z" fill="none" stroke="#fff" strokeWidth="3" /></TaskIcon>,
  },
  { name: "Chrome", icon: <ChromeLogo /> },
  {
    name: "Word",
    icon: <TaskIcon><path d="M4 2h14l1 3-3 17H1z" fill="#aac6eb" stroke="#5c87c6" /><path d="M7 4l16-1-2 18H5z" fill="#edf4fd" /><path d="M7 6h1l1 7 3-7 1 7 3-7" fill="none" stroke="#2b579a" strokeWidth="1.800" /><path d="M17 8h4M17 11h4M8 15h12M8 18h12" stroke="#4777bb" strokeWidth="1.500" /></TaskIcon>,
  },
  {
    name: "PowerPoint",
    icon: <TaskIcon><path d="M4 2h14l1 3-3 17H1z" fill="#f4a080" stroke="#dd5d2e" /><path d="M5 6l18-1-2 17H4z" fill="#fff" stroke="#e8683a" /><path d="M8 9.500h5M8 12.500h4M7.500 15.500h4" fill="none" stroke="#d9481c" strokeWidth="1.800" /><circle cx="17" cy="13" r="3.500" fill="#e2572a" /><path d="M17 13l4-2v4z" fill="#fff" /></TaskIcon>,
  },
];

function Taskbar() {
  return (
    <footer className="flex h-10 shrink-0 items-stretch bg-[#101a1b] font-['Open_Sans'] text-white">
      <button aria-label="Start" className="flex w-12 items-center justify-center bg-[#061315]">
        <svg viewBox="0 0 16 16" className="h-4 w-4" fill="#fff"><path d="M0 2.300L6.500 1.400v6.100H0zM7.300 1.300L16 0v7.500H7.300zM0 8.400h6.500v6.200L0 13.700zM7.300 8.400H16V16l-8.700-1.300z" /></svg>
      </button>
      <input
        aria-label="Search the web and Windows"
        placeholder="Search the web and Windows"
        className="w-[344px] bg-[#333] px-3 text-[14px] outline-none placeholder:text-[#9a9a9a]"
      />
      <nav className="flex">
        {apps.map(({ name, icon }) => (
          <button
            key={name}
            aria-label={name}
            className={clsx(
              "flex items-center justify-center",
              name === "PowerPoint" ? "mx-1 w-[41px] border-b-2 border-[#f7a8c0]" : "w-[49px]",
              name === "Word" && "border-b-2 border-[#f7a8c0] bg-[#434b4d]",
            )}
          >
            {icon}
          </button>
        ))}
      </nav>
      <div className="ml-auto flex items-center gap-2 pr-1">
        {[
          { name: "Hidden icons", d: "M2.500 10.500l5.500-5 5.500 5" },
          { name: "Battery", d: "M.5 4.500h13v7H.5zM14 6.500h1.500v3H14M3 6.500h3v3H3zM3 8h3" },
          { name: "Network", d: "M4 13Q5 4 15 2M7 14q1-6 8-8M10 14q1-3 5-4" },
          { name: "Volume", d: "M1.500 6v4H3l4 3.500v-11L3 6zM10 6l4 4M14 6l-4 4" },
          { name: "Notifications", d: "M.5 1.500h15v11h-5L8 15l-2.500-2.500h-5zM3 4.500h10M3 7h10M3 9.500h7" },
        ].map((item) => (
          <button key={item.name} aria-label={item.name}>
            <svg viewBox="0 0 16 16" className="h-4 w-4" fill="none" stroke="#fff" strokeWidth="1.200">
              <path d={item.d} />
              {item.name === "Network" && (
                <g stroke="none"><path d="M0 15l4.500-9L9 15z" fill="#fdc82f" /><path d="M4 9h1v3H4zM4 13h1v1H4z" fill="#222" /></g>
              )}
            </svg>
          </button>
        ))}
        <time className="ml-1 flex h-full flex-col items-center justify-center border-r border-[#56605f] pr-2.5 text-[11px] leading-[17px]">
          <span>12:18</span>
          <span>19-03-2020</span>
        </time>
      </div>
    </footer>
  );
}

export default function App() {
  return (
    <div className="flex h-screen flex-col overflow-hidden font-['Open_Sans',sans-serif] text-[11px]">
      <BrowserBar />
      <TitleBar />
      <TabRow />
      <Ribbon />
      <Workspace />
      <StatusBar />
      <Taskbar />
    </div>
  );
}
